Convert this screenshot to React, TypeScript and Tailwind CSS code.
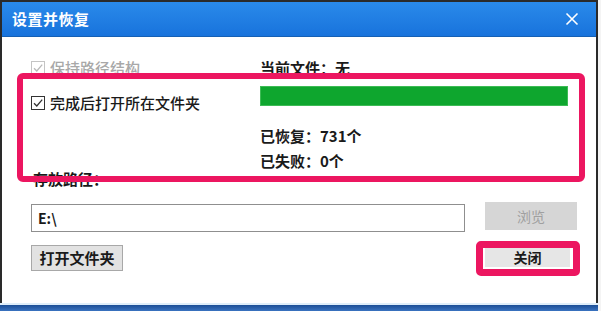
import React from 'react';

const font = { fontFamily: '"Noto Sans CJK SC", "Noto Sans", sans-serif' };

function CheckBox({ disabled = false }: { disabled?: boolean }) {
  const color = disabled ? '#b8b8b8' : '#333333';
  return (
    <span
      className={`flex h-[14px] w-[14px] shrink-0 items-center justify-center border ${
        disabled ? 'border-[#c4c4c4]' : 'border-[#333333]'
      } bg-white`}
    >
      <svg width="12" height="12" viewBox="0 0 12 12" fill="none">
        <path d="M2 6.2 L4.8 9 L10.2 2.6" stroke={color} strokeWidth="1.3" />
      </svg>
    </span>
  );
}

export default function App() {
  return (
    <div
      className="relative h-[311px] w-[601px] overflow-hidden bg-[#f4f4f4] text-[#1a1a1a]"
      style={font}
    >
      <div className="flex h-[303px] w-[598px] flex-col border-x-[2px] border-t-[2px] border-[#2a2a2a] bg-white">
        {/* title bar */}
        <div className="flex h-[35px] shrink-0 items-center justify-between border-b border-[#1560b4] bg-gradient-to-b from-[#2a8aea] to-[#1873dc] pl-[10px] pr-[14px]">
          <span className="text-[15px] font-bold tracking-[0.5px] text-white">设置并恢复</span>
          <svg width="14" height="14" viewBox="0 0 14 14" className="mr-[3px]">
            <path d="M1.5 1.5 L12.5 12.5 M12.5 1.5 L1.5 12.5" stroke="#ffffff" strokeWidth="1.6" />
          </svg>
        </div>

        {/* body */}
        <div className="flex flex-1 flex-col pl-[29px] pt-[21px] text-[15px]">
          <div className="flex h-[20px] items-center">
            <div className="flex w-[229px] items-center gap-[5px] text-[#a8a8a8]">
              <CheckBox disabled />
              <span className="font-medium">保持路径结构</span>
            </div>
            <span className="font-bold">当前文件：无</span>
          </div>

          <div className="mt-[8px] flex h-[26px] items-start">
            <div className="mt-[7px] flex h-[20px] w-[229px] items-center gap-[5px]">
              <CheckBox />
              <span className="font-medium">完成后打开所在文件夹</span>
            </div>
            <div className="h-[20px] w-[308px] border border-[#3dbb55] bg-[#0ea62e]" />
          </div>

          <div className="mt-[14px] flex h-[20px] items-center pl-[229px] font-bold">
            已恢复：731个
          </div>
          <div className="mt-[5px] flex h-[20px] items-center pl-[229px] font-bold">
            已失败：0个
          </div>
          <div className="-mt-[2px] flex h-[20px] items-center pl-[2px] font-bold">存放路径：</div>

          <div className="mt-[13px] flex items-start">
            <div className="mt-[2px] flex h-[28px] w-[434px] items-center border border-[#8f8f8f] bg-white pl-[6px] text-[14px] font-bold">
              E:\
            </div>
            <div className="ml-[20px] flex h-[28px] w-[92px] items-center justify-center bg-[#d6d6d6] text-[14px] text-[#a0a0a0]">
              浏览
            </div>
          </div>

          <div className="mt-[13px] flex items-start">
            <div className="flex h-[26px] w-[92px] items-center justify-center border border-[#a8a8a8] bg-[#e2e2e2] text-[15px] font-bold">
              打开文件夹
            </div>
            <div className="ml-[362px] mt-[2px] flex h-[20px] w-[85px] items-center justify-center bg-[#e6e6e6] text-[14px] font-bold">
              关闭
            </div>
          </div>
        </div>
      </div>

      {/* bottom frame */}
      <div className="absolute bottom-0 left-0 h-[8px] w-[598px] border-t-2 border-[#dfeefa] bg-gradient-to-b from-[#1c4e96] to-[#3a73c0]" />

      {/* annotation highlights */}
      <div className="pointer-events-none absolute left-[17px] top-[73px] h-[109px] w-[568px] rounded-[6px] border-[6px] border-[#ec1660]" />
      <div className="pointer-events-none absolute left-[476px] top-[241px] h-[35px] w-[104px] rounded-[5px] border-[7px] border-[#ec1660]" />
    </div>
  );
}
